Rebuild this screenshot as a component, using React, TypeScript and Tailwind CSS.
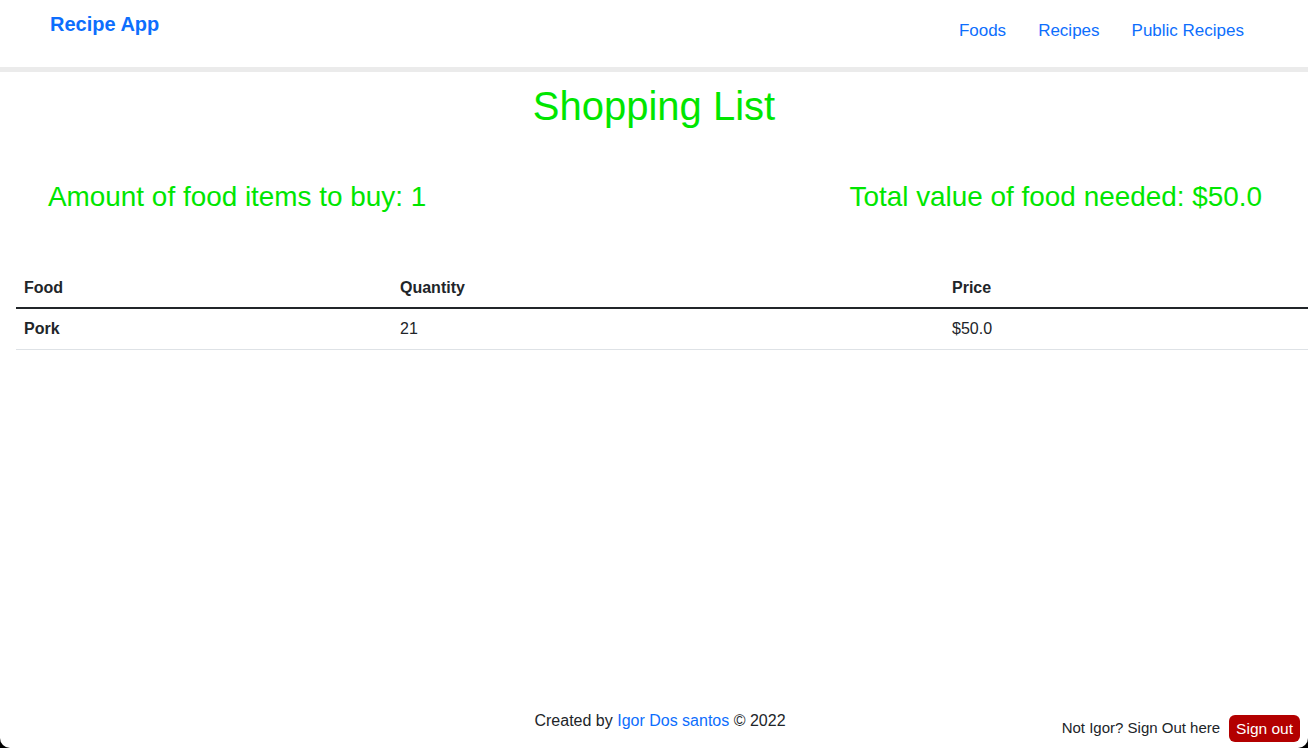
export default function App() {
  const rows = [{ food: "Pork", quantity: 21, price: "$50.0" }];

  return (
    <div className="bg-black">
      <div
        className="flex h-[748px] flex-col overflow-hidden rounded-b-[10px] bg-white text-[#212529]"
        style={{ fontFamily: '"Liberation Sans", Arial, sans-serif' }}
      >
        <nav className="flex h-[72px] items-start justify-between border-b-[5px] border-[#ebebeb] pl-[50px] pr-[64px]">
          <a className="mt-[9px] text-[20px] font-bold text-[#0d6efd]">Recipe App</a>
          <ul className="mt-[18px] flex gap-[32px] text-[17px] text-[#0d6efd]">
            <li>Foods</li>
            <li>Recipes</li>
            <li>Public Recipes</li>
          </ul>
        </nav>

        <main className="flex-1">
          <h1 className="mt-[10px] text-center text-[40px] leading-[48px] text-[#00e600]">
            Shopping List
          </h1>
          <div className="mt-[50px] flex justify-between pl-[48px] pr-[46px] text-[27.9px] leading-[34px] text-[#00e600]">
            <p>Amount of food items to buy: 1</p>
            <p>Total value of food needed: $50.0</p>
          </div>

          <table className="ml-4 mt-[54px] w-[1292px] border-collapse text-left text-[16px]">
            <thead>
              <tr className="border-b-2 border-[#212529]">
                <th className="w-[376px] px-2 pt-[8px] pb-[7px] font-bold">Food</th>
                <th className="w-[552px] px-2 pt-[8px] pb-[7px] font-bold">Quantity</th>
                <th className="px-2 pt-[8px] pb-[7px] font-bold">Price</th>
              </tr>
            </thead>
            <tbody>
              {rows.map((r) => (
                <tr key={r.food} className="border-b border-[#dee2e6]">
                  <td className="px-2 pt-[8px] pb-[8px] font-bold">{r.food}</td>
                  <td className="px-2 pt-[8px] pb-[8px]">{r.quantity}</td>
                  <td className="px-2 pt-[8px] pb-[8px]">{r.price}</td>
                </tr>
              ))}
            </tbody>
          </table>
        </main>

        <footer className="grid grid-cols-3 items-end pb-[6px] text-[16px]">
          <div />
          <p className="mb-[9px] pl-[12px] text-center">
            Created by <a className="text-[#0d6efd]">Igor Dos santos</a> © 2022
          </p>
          <div className="flex items-center justify-end gap-[9px] pr-[8px] text-[15px]">
            <span>Not Igor? Sign Out here</span>
            <button className="rounded-[6px] bg-[#b30000] px-[7px] py-[2px] text-[15.5px] text-white">
              Sign out
            </button>
          </div>
        </footer>
      </div>
    </div>
  );
}
